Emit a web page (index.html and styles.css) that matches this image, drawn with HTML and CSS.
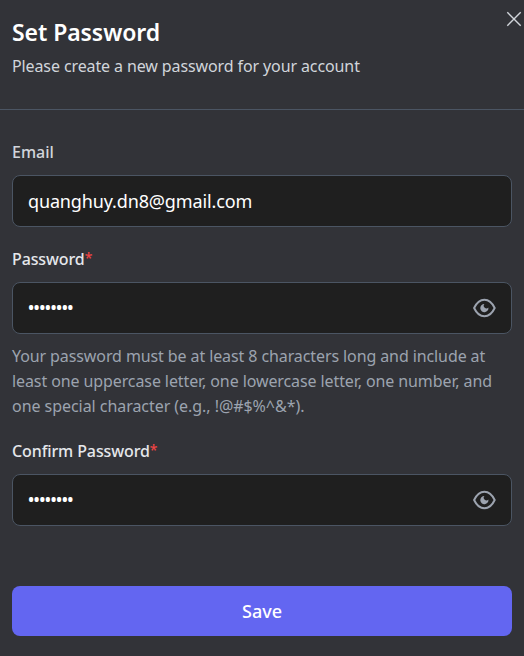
FILE: index.html
```html
<!DOCTYPE html>
<html lang="en">
<head>
<meta charset="utf-8">
<title>Set Password</title>
<link rel="stylesheet" href="styles.css">
</head>
<body>
<main class="dialog">
  <header class="header">
    <h1 class="title">Set Password</h1>
    <p class="subtitle">Please create a new password for your account</p>
    <button class="close" aria-label="Close"><svg width="16" height="16" viewBox="0 0 16 16"><path d="M1.3 1.3l13.4 13.4M14.7 1.3L1.3 14.7"/></svg></button>
  </header>
  <form class="form">
    <div class="label email-label"><span>Email</span></div>
    <div class="field"><span class="email">quanghuy.dn8@gmail.com</span></div>
    <div class="label password-label"><span>Password</span><span class="required">*</span></div>
    <div class="field">
      <span class="dots">••••••••</span>
      <svg class="eye" width="24" height="24" viewBox="-0.4 0 24 24"><path class="lid" d="M1.7 12C4.2 6.7 7.8 3.7 12 3.7S19.8 6.7 22.3 12C19.8 17.3 16.2 20.3 12 20.3S4.2 17.3 1.7 12Z"/><path class="iris" d="M12 8a2.6 2.6 0 0 0 4 3.4A4.1 4.1 0 1 1 12 8Z"/></svg>
    </div>
    <p class="hint">Your password must be at least 8 characters long and include at<br>least one uppercase letter, one lowercase letter, one number, and<br><span class="symbols">one special character (e.g., !@#$%^&amp;*).</span></p>
    <div class="label confirm-label"><span>Confirm Password</span><span class="required">*</span></div>
    <div class="field">
      <span class="dots">••••••••</span>
      <svg class="eye" width="24" height="24" viewBox="-0.4 0 24 24"><path class="lid" d="M1.7 12C4.2 6.7 7.8 3.7 12 3.7S19.8 6.7 22.3 12C19.8 17.3 16.2 20.3 12 20.3S4.2 17.3 1.7 12Z"/><path class="iris" d="M12 8a2.6 2.6 0 0 0 4 3.4A4.1 4.1 0 1 1 12 8Z"/></svg>
    </div>
    <button class="save" type="button">Save</button>
  </form>
</main>
</body>
</html>
```
FILE: styles.css
```css
* { box-sizing: border-box; }
body {
  margin: 0;
  background: #323338;
  font-family: "Noto Sans", sans-serif;
  font-size: 16px;
  color: #fff;
}
.dialog { height: 656px; overflow: hidden; }
.header {
  position: relative;
  height: 110px;
  padding: 16px 12px 0;
  border-bottom: 1px solid #4b5563;
}
.title { margin: 0; font-size: 23px; line-height: 32px; font-weight: 600; letter-spacing: -0.07px; white-space: nowrap; }
.subtitle { margin: 6px 0 0; line-height: 24px; color: #d1d5db; white-space: nowrap; letter-spacing: -0.11px; }
.close { position: absolute; top: 11px; right: 2px; padding: 0; border: 0; background: none; width: 16px; height: 16px; }
.close svg { display: block; fill: none; stroke: #d1d5db; stroke-width: 1.4; }
.form { padding: 0 12px; }
.label { display: flex; height: 24px; line-height: 24px; font-weight: 500; color: #e5e7eb; white-space: nowrap; letter-spacing: -0.11px; }
.email-label { margin: 30px 0 11px; color: #d1d5db; letter-spacing: 0; }
.password-label { margin: 20px 0 11px; }
.confirm-label { margin: 20px 0 11px; }
.required { color: #ef4444; font-size: 14px; line-height: 22px; }
.field {
  display: flex;
  align-items: center;
  justify-content: space-between;
  height: 52px;
  padding: 0 15px;
  border: 1px solid #4b5563;
  border-radius: 8px;
  background: #1f1f1f;
}
.email { font-size: 18px; letter-spacing: -0.14px; }
.dots { margin-left: -0.5px; font-size: 19px; line-height: 24px; letter-spacing: -1.53px; }
.eye { display: block; }
.lid { fill: none; stroke: #9ca3af; stroke-width: 2; stroke-linejoin: round; }
.iris { fill: #9ca3af; }
.hint { margin: 10px 0 0; line-height: 25px; color: #9ca3af; white-space: nowrap; letter-spacing: -0.1px; }
.symbols { letter-spacing: -0.05px; }
.save {
  display: block;
  width: 100%;
  height: 50px;
  margin-top: 60px;
  border: 0;
  border-radius: 8px;
  background: #6366f1;
  color: #fff;
  font: 500 18px "Noto Sans", sans-serif;
}
```
